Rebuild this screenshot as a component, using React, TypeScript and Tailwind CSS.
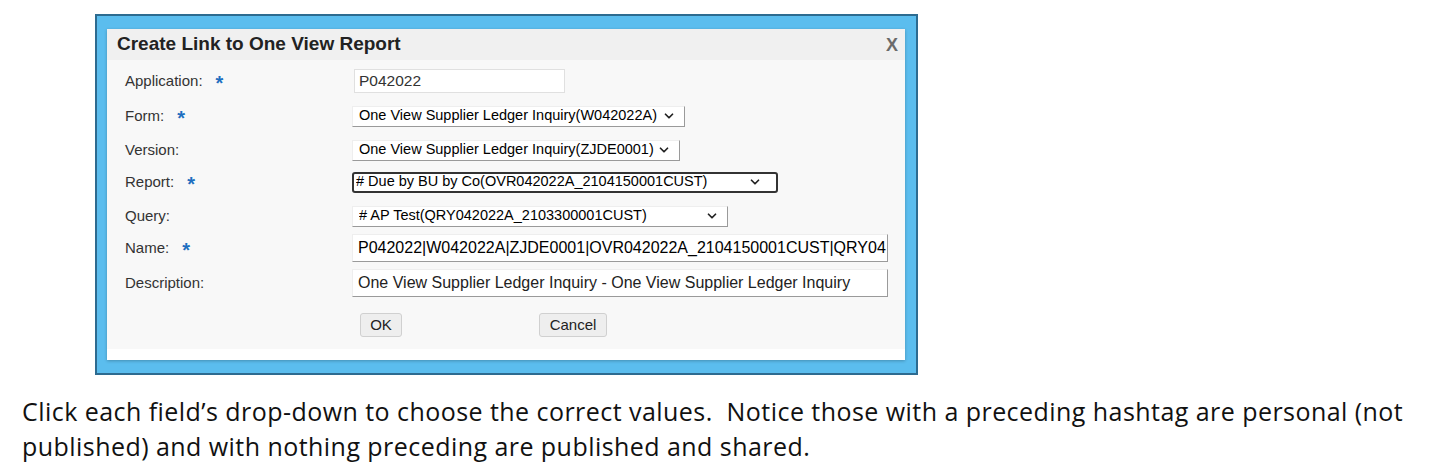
import { ChevronDown } from "lucide-react";

const ARIAL = "font-['Liberation_Sans',Arial,sans-serif]";

function Label({ text, required }: { text: string; required?: boolean }) {
  return (
    <div className="flex items-center text-[15px] text-[#333] pl-[18px]">
      <span>{text}</span>
      {required && (
        <span className="ml-[13px] text-[20px] font-bold leading-none text-[#1f6fc0] relative top-[2px]">*</span>
      )}
    </div>
  );
}

function FakeSelect({
  value,
  width,
  focused,
}: {
  value: string;
  width: number;
  focused?: boolean;
}) {
  return (
    <div
      style={{ width }}
      className={
        focused
          ? "flex items-center justify-between h-[21px] bg-white border-2 border-[#333] rounded-[3px] pl-[2px] pr-[14px] text-[14.5px] text-black"
          : "flex items-center justify-between h-[21px] bg-white border-t border-l border-t-[#eee] border-l-[#eee] border-b border-r border-b-[#9a9a9a] border-r-[#9a9a9a] pl-[6px] pr-[8px] text-[14.5px] text-black"
      }
    >
      <span className="whitespace-nowrap overflow-hidden">{value}</span>
      <ChevronDown size={14} strokeWidth={3} className="shrink-0 text-[#222]" />
    </div>
  );
}

export default function App() {
  return (
    <div className="w-[1429px] h-[463px] bg-white overflow-hidden">
      <div className={`ml-[95px] mt-[14px] w-[823px] h-[361px] border-2 border-[#2d6b90] bg-[#5bbdee] pt-[13px] pl-[10px] ${ARIAL}`}>
        <div className="w-[798px] h-[331px] bg-white shadow-[0_1px_3px_rgba(0,0,0,0.25)] flex flex-col">
          {/* title bar */}
          <div className="h-[31px] bg-[#f0f0f0] flex items-center justify-between pl-[10px] pr-[7px]">
            <span className="text-[19px] font-bold text-[#222]">Create Link to One View Report</span>
            <span className="text-[18px] font-bold text-[#6a6a6a] leading-none">X</span>
          </div>

          {/* body */}
          <div className="bg-[#f8f8f8] pt-[4px] h-[289px] grid grid-cols-[245px_1fr] content-start">
            <div className="h-[34px] flex items-center"><Label text="Application:" required /></div>
            <div className="h-[34px] flex items-center pl-[2px]">
              <div className="w-[211px] h-[24px] bg-white border border-[#e0e0e0] pl-[4px] flex items-center text-[15.5px] text-[#333]">P042022</div>
            </div>

            <div className="h-[36px] flex items-center"><Label text="Form:" required /></div>
            <div className="h-[36px] flex items-center">
              <FakeSelect value="One View Supplier Ledger Inquiry(W042022A)" width={333} />
            </div>

            <div className="h-[32px] flex items-center"><Label text="Version:" /></div>
            <div className="h-[32px] flex items-center">
              <FakeSelect value="One View Supplier Ledger Inquiry(ZJDE0001)" width={328} />
            </div>

            <div className="h-[32px] flex items-center"><Label text="Report:" required /></div>
            <div className="h-[32px] flex items-center">
              <FakeSelect value="# Due by BU by Co(OVR042022A_2104150001CUST)" width={426} focused />
            </div>

            <div className="h-[36px] flex items-center"><Label text="Query:" /></div>
            <div className="h-[36px] flex items-center">
              <FakeSelect value="# AP Test(QRY042022A_2103300001CUST)" width={376} />
            </div>

            <div className="h-[28px] flex items-center"><Label text="Name:" required /></div>
            <div className="h-[28px] flex items-center">
              <div className="w-[536px] h-[28px] bg-white border-t border-l border-t-[#eee] border-l-[#eee] border-b border-r border-b-[#9a9a9a] border-r-[#9a9a9a] pl-[5px] flex items-center text-[16px] text-black whitespace-nowrap">
                P042022|W042022A|ZJDE0001|OVR042022A_2104150001CUST|QRY04
              </div>
            </div>

            <div className="h-[42px] flex items-center"><Label text="Description:" /></div>
            <div className="h-[42px] flex items-center">
              <div className="w-[536px] h-[28px] bg-white border-t border-l border-t-[#eee] border-l-[#eee] border-b border-r border-b-[#9a9a9a] border-r-[#9a9a9a] pl-[5px] flex items-center text-[16px] text-[#222] whitespace-nowrap overflow-hidden">
                One View Supplier Ledger Inquiry - One View Supplier Ledger Inquiry
              </div>
            </div>

            <div className="h-[42px]" />
            <div className="h-[42px] flex items-center pl-[8px]">
              <button className="h-[24px] w-[42px] bg-[#eeeeee] border border-[#d0d0d0] rounded-[3px] text-[15px] text-[#222]">OK</button>
              <button className="ml-[137px] h-[24px] w-[68px] bg-[#eeeeee] border border-[#d0d0d0] rounded-[3px] text-[15px] text-[#222]">Cancel</button>
            </div>
          </div>
          <div className="flex-1 bg-white" />
        </div>
      </div>

      <p className="mt-[19px] ml-[22px] text-[25px] leading-[35px] tracking-[0.45px] text-[#111] font-['Open_Sans',sans-serif] whitespace-pre">
        {"Click each field\u2019s drop-down to choose the correct values.  Notice those with a preceding hashtag are personal (not\npublished) and with nothing preceding are published and shared."}
      </p>
    </div>
  );
}
